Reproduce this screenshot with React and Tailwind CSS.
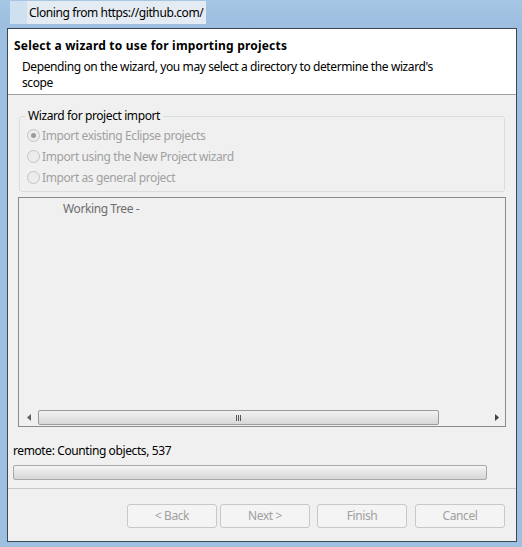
import React from 'react';

const font = { fontFamily: '"Noto Sans", "Open Sans", sans-serif' };

function Radio({ checked, label }) {
  return (
    <div className="flex items-center h-[21px] text-[12px] text-[#a0a0a0] tracking-[-0.4px]">
      <span className="w-[13px] h-[13px] rounded-full border border-[#c4c4c4] bg-[#ececec] flex items-center justify-center mr-[2px]">
        {checked && <span className="w-[5px] h-[5px] rounded-full bg-[#9a9a9a]" />}
      </span>
      {label}
    </div>
  );
}

function Button({ children, className = '' }) {
  return (
    <div className={`w-[90px] h-[24px] border border-[#c8c8c8] rounded-[3px] bg-[#f4f4f4] flex items-center justify-center text-[12px] text-[#a0a0a0] ${className}`}>
      {children}
    </div>
  );
}

export default function App() {
  return (
    <div className="w-[522px] h-[547px] bg-[#9dbfe0] relative overflow-hidden" style={font}>
      {/* Title bar */}
      <div className="h-[28px] flex items-start pt-[1px] pl-[10px] bg-gradient-to-b from-[#a6c6e4] to-[#9cbde0]">
        <div className="w-[17px] h-[23px] bg-[#cfe0f0]" />
        <div className="h-[23px] pl-[2px] pr-[3px] bg-[#e4ebf2] text-[12px] text-black flex items-center tracking-[-0.4px]">
          Cloning from https://github.com/
        </div>
      </div>

      {/* Client area */}
      <div className="ml-[7px] mr-[5px] h-[514px] border border-[#3a4756] bg-[#f0f0f0] flex flex-col">
        {/* Header */}
        <div className="h-[66px] bg-white border-b border-[#a0a0a0] px-[6px] pt-[8px]">
          <div className="text-[12px] font-bold text-black leading-[18px] tracking-[0.2px]">
            Select a wizard to use for importing projects
          </div>
          <div className="pl-[8px] mt-[4px] text-[12px] text-black leading-[16px] tracking-[-0.4px]">
            Depending on the wizard, you may select a directory to determine the wizard's
            <br />
            scope
          </div>
        </div>

        {/* Body */}
        <div className="flex-1 flex flex-col px-[10px] pt-[21px] tracking-[-0.4px]">
          <div className="relative mx-[1px] h-[76px] border border-[#d9dde0] rounded-[3px] px-[7px] pt-[8px]">
            <div className="absolute -top-[9px] left-[5px] px-[3px] bg-[#f0f0f0] text-[12px] text-black leading-[16px]">
              Wizard for project import
            </div>
            <Radio checked label="Import existing Eclipse projects" />
            <Radio label="Import using the New Project wizard" />
            <Radio label="Import as general project" />
          </div>

          <div className="mt-[5px] h-[230px] border border-[#8a8a8a] flex flex-col">
            <div className="flex-1 pl-[44px] pt-[2px] text-[12px] text-[#6d6d6d]">Working Tree -</div>
            <div className="h-[17px] flex items-center bg-[#f0f0f0]">
              <div className="w-[19px] flex justify-center">
                <svg width="4" height="7" viewBox="0 0 4 7"><path d="M4 0 L0 3.5 L4 7 Z" fill="#606060" /></svg>
              </div>
              <div className="w-[401px] h-[15px] border border-[#9a9a9a] rounded-[2px] bg-gradient-to-b from-[#f2f2f2] to-[#d8d8d8] flex items-center justify-center">
                <div className="flex gap-[1px]">
                  <span className="w-[1px] h-[6px] bg-[#555]" />
                  <span className="w-[1px] h-[6px] bg-[#555]" />
                  <span className="w-[1px] h-[6px] bg-[#555]" />
                </div>
              </div>
              <div className="flex-1 flex justify-end pr-[6px]">
                <svg width="4" height="7" viewBox="0 0 4 7"><path d="M0 0 L4 3.5 L0 7 Z" fill="#404040" /></svg>
              </div>
            </div>
          </div>

          <div className="mt-[16px] -ml-[5px] text-[12px] text-black leading-[16px]">
            remote: Counting objects, 537
          </div>
          <div className="mt-[6px] -ml-[5px] w-[474px] h-[15px] border border-[#a8a8a8] rounded-[2px] bg-gradient-to-b from-[#f4f4f4] to-[#d6d6d6]" />
        </div>

        {/* Footer */}
        <div className="h-[53px] border-t border-[#c8c8c8] flex items-start pt-[15px] pl-[119px] tracking-[-0.4px]">
          <Button>&lt; Back</Button>
          <Button className="ml-[3px]">Next &gt;</Button>
          <Button className="ml-[7px]">Finish</Button>
          <Button className="ml-[8px]">Cancel</Button>
        </div>
      </div>
    </div>
  );
}
